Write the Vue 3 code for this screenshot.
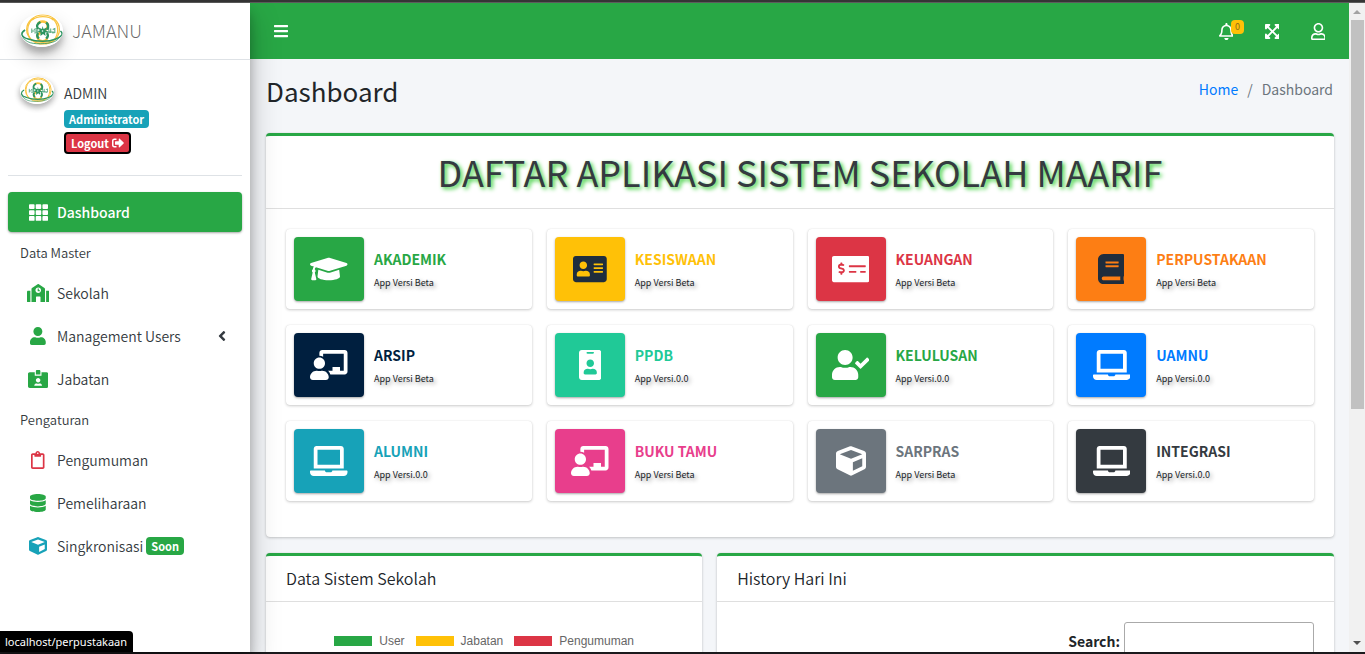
<script setup>
import { h } from 'vue'

const shapes = {
  bars: [448, 'M16 132h416c8.8 0 16-7.2 16-16V76c0-8.8-7.2-16-16-16H16C7.200 60 0 67.200 0 76v40c0 8.800 7.200 16 16 16zm0 160h416c8.800 0 16-7.200 16-16v-40c0-8.800-7.200-16-16-16H16c-8.800 0-16 7.200-16 16v40c0 8.800 7.200 16 16 16zm0 160h416c8.800 0 16-7.200 16-16v-40c0-8.800-7.200-16-16-16H16c-8.800 0-16 7.200-16 16v40c0 8.800 7.200 16 16 16z'],
  bell: [448, 'M439.39 362.29c-19.32-20.76-55.47-51.99-55.47-154.29 0-77.7-54.48-139.9-127.94-155.16V32c0-17.67-14.32-32-31.98-32s-31.98 14.33-31.98 32v20.84C118.56 68.1 64.08 130.3 64.08 208c0 102.3-36.15 133.53-55.47 154.29-6 6.45-8.66 14.16-8.61 21.71.11 16.4 12.98 32 32.1 32h383.8c19.12 0 32-15.6 32.1-32 .05-7.55-2.61-15.27-8.61-21.71zM67.53 368c21.22-27.97 44.42-74.33 44.53-159.42 0-.2-.06-.38-.06-.58 0-61.86 50.14-112 112-112s112 50.14 112 112c0 .2-.06.38-.06.58.11 85.1 23.31 131.46 44.53 159.42H67.53zM224 512c35.32 0 63.97-28.65 63.97-64H160.03c0 35.35 28.65 64 63.97 64z'],
  expand: [448, 'M448 344v112a23.94 23.94 0 0 1-24 24H312c-21.39 0-32.09-25.9-17-41l36.2-36.2L224 295.6 116.77 402.9 153 439c15.09 15.1 4.39 41-17 41H24a23.94 23.94 0 0 1-24-24V344c0-21.4 25.89-32.1 41-17l36.19 36.2L184.46 256 77.18 148.7 41 185c-15.1 15.1-41 4.4-41-17V56a23.94 23.94 0 0 1 24-24h112c21.39 0 32.09 25.9 17 41l-36.2 36.2L224 216.4l107.23-107.3L295 73c-15.09-15.1-4.39-41 17-41h112a23.94 23.94 0 0 1 24 24v112c0 21.4-25.89 32.1-41 17l-36.19-36.2L263.54 256l107.28 107.3L407 327.1c15.1-15.2 41-4.5 41 16.9z'],
  userLine: [448, 'M313.6 304c-28.7 0-42.5 16-89.6 16-47.1 0-60.8-16-89.6-16C60.2 304 0 364.2 0 438.4V464c0 26.5 21.5 48 48 48h352c26.5 0 48-21.5 48-48v-25.6c0-74.2-60.2-134.4-134.4-134.4zM400 464H48v-25.6c0-47.6 38.8-86.4 86.4-86.4 14.6 0 38.3 16 89.6 16 51.7 0 74.9-16 89.6-16 47.6 0 86.4 38.8 86.4 86.4V464zM224 288c79.5 0 144-64.5 144-144S303.5 0 224 0 80 64.5 80 144s64.5 144 144 144zm0-240c52.9 0 96 43.1 96 96s-43.1 96-96 96-96-43.1-96-96 43.1-96 96-96z'],
  user: [448, 'M224 256c70.7 0 128-57.3 128-128S294.7 0 224 0 96 57.3 96 128s57.3 128 128 128zm89.6 32h-16.7c-22.2 10.2-46.9 16-72.9 16s-50.6-5.8-72.9-16h-16.7C60.2 288 0 348.2 0 422.4V464c0 26.5 21.5 48 48 48h352c26.5 0 48-21.5 48-48v-41.6c0-74.2-60.2-134.4-134.4-134.4z'],
  signOut: [512, 'M497 273L329 441c-15 15-41 4.5-41-17v-96H152c-13.3 0-24-10.7-24-24v-96c0-13.3 10.7-24 24-24h136V88c0-21.4 25.9-32 41-17l168 168c9.3 9.4 9.3 24.6 0 34zM192 436v-40c0-6.6-5.4-12-12-12H96c-17.7 0-32-14.3-32-32V160c0-17.7 14.3-32 32-32h84c6.6 0 12-5.4 12-12V76c0-6.6-5.4-12-12-12H96c-53 0-96 43-96 96v192c0 53 43 96 96 96h84c6.6 0 12-5.4 12-12z'],
  teacher: [640, 'M208 352c-2.39 0-4.78.35-7.06 1.09C187.98 357.3 174.35 360 160 360c-14.35 0-27.98-2.7-40.95-6.91-2.28-.74-4.66-1.09-7.05-1.09C49.94 352-.33 402.48 0 464.62.14 490.88 21.73 512 48 512h224c26.27 0 47.86-21.12 48-47.38.33-62.14-49.94-112.62-112-112.62zm-48-32c53.02 0 96-42.98 96-96s-42.98-96-96-96-96 42.98-96 96 42.98 96 96 96zM592 0H208c-26.47 0-48 22.25-48 49.59V96c23.42 0 45.1 6.78 64 17.8V64h352v288h-64v-64H384v64h-76.24c19.1 16.69 33.12 38.73 39.69 64H592c26.47 0 48-22.25 48-49.59V49.59C640 22.25 618.47 0 592 0z'],
  laptop: [640, 'M624 416H381.54c-.74 19.81-14.71 32-32.74 32H288c-18.69 0-33.02-17.47-32.77-32H16c-8.8 0-16 7.2-16 16v16c0 35.2 28.8 64 64 64h512c35.2 0 64-28.8 64-64v-16c0-8.8-7.2-16-16-16zM576 48c0-26.4-21.6-48-48-48H112C85.6 0 64 21.6 64 48v336h512V48zm-64 272H128V64h384v256z'],
  graduation: [640, 'M622.34 153.2L343.4 67.5c-15.2-4.67-31.6-4.67-46.79 0L17.66 153.2c-23.54 7.23-23.54 38.36 0 45.59l48.63 14.94c-10.67 13.19-17.23 29.28-17.88 46.9C38.78 266.15 32 276.11 32 288c0 10.78 5.68 19.85 13.86 25.65L20.33 428.53C18.11 438.52 25.71 448 35.94 448h56.11c10.24 0 17.84-9.48 15.62-19.47L82.14 313.65C90.32 307.85 96 298.78 96 288c0-11.57-6.47-21.25-15.66-26.87.76-15.02 8.44-28.3 20.69-36.72L296.6 284.5c9.06 2.78 26.44 6.25 46.79 0l278.95-85.7c23.55-7.24 23.55-38.36 0-45.6zM352.79 315.09c-28.53 8.76-52.84 3.92-65.59 0l-145.02-44.55L128 384c0 35.35 85.96 64 192 64s192-28.65 192-64l-14.18-113.47-145.03 44.56z'],
  userCheck: [640, 'M224 256c70.7 0 128-57.3 128-128S294.7 0 224 0 96 57.3 96 128s57.3 128 128 128zm89.6 32h-16.7c-22.2 10.2-46.9 16-72.9 16s-50.6-5.8-72.9-16h-16.7C60.2 288 0 348.2 0 422.4V464c0 26.5 21.5 48 48 48h352c26.5 0 48-21.5 48-48v-41.6c0-74.2-60.2-134.4-134.4-134.4zm323-128.4l-27.8-28.1c-4.6-4.7-12.1-4.7-16.8-.1l-104.8 104-45.5-45.8c-4.6-4.7-12.1-4.7-16.8-.1l-28.1 27.9c-4.7 4.6-4.7 12.1-.1 16.8l81.7 82.3c4.6 4.7 12.1 4.7 16.8.1l141.3-140.2c4.6-4.7 4.7-12.2.1-16.8z'],
  cube: [512, 'M239.1 6.3l-208 78c-18.7 7-31.1 25-31.1 45v225.1c0 18.2 10.3 34.8 26.5 42.9l208 104c13.5 6.8 29.4 6.8 42.9 0l208-104c16.3-8.1 26.5-24.8 26.5-42.9V129.3c0-20-12.4-37.9-31.1-44.9l-208-78C262 2.2 250 2.2 239.1 6.3zM256 68.4l192 72v1.1l-192 78-192-78v-1.1l192-72zm32 356V275.5l160-65v133.9l-160 80z'],
  book: [448, 'M448 360V24c0-13.3-10.7-24-24-24H96C43 0 0 43 0 96v320c0 53 43 96 96 96h328c13.3 0 24-10.7 24-24v-16c0-7.5-3.5-14.3-8.9-18.7-4.2-15.4-4.2-59.3 0-74.7 5.4-4.3 8.9-11.1 8.9-18.6zM128 134c0-3.3 2.7-6 6-6h212c3.3 0 6 2.7 6 6v20c0 3.3-2.7 6-6 6H134c-3.3 0-6-2.7-6-6v-20zm0 64c0-3.3 2.7-6 6-6h212c3.3 0 6 2.7 6 6v20c0 3.3-2.7 6-6 6H134c-3.3 0-6-2.7-6-6v-20zm253.4 250H96c-17.7 0-32-14.3-32-32 0-17.6 14.4-32 32-32h285.4c-1.9 17.1-1.9 46.9 0 64z'],
  addressCard: [576, 'M528 32H48C21.5 32 0 53.5 0 80v352c0 26.5 21.5 48 48 48h480c26.5 0 48-21.5 48-48V80c0-26.5-21.5-48-48-48zm-352 96c35.3 0 64 28.7 64 64s-28.7 64-64 64-64-28.7-64-64 28.7-64 64-64zm112 236.8c0 10.6-10 19.2-22.4 19.2H86.4C74 384 64 375.4 64 364.8v-19.2c0-31.8 30.1-57.6 67.2-57.6h5c12.3 5.1 25.7 8 39.8 8s27.6-2.9 39.8-8h5c37.1 0 67.2 25.8 67.2 57.6v19.2zM512 312c0 4.4-3.6 8-8 8H360c-4.4 0-8-3.6-8-8v-16c0-4.4 3.6-8 8-8h144c4.4 0 8 3.6 8 8v16zm0-64c0 4.4-3.6 8-8 8H360c-4.4 0-8-3.6-8-8v-16c0-4.4 3.6-8 8-8h144c4.4 0 8 3.6 8 8v16zm0-64c0 4.4-3.6 8-8 8H360c-4.4 0-8-3.6-8-8v-16c0-4.4 3.6-8 8-8h144c4.4 0 8 3.6 8 8v16z'],
  idBadge: [384, 'M336 0H48C21.5 0 0 21.5 0 48v416c0 26.5 21.5 48 48 48h288c26.5 0 48-21.5 48-48V48c0-26.5-21.5-48-48-48zM144 32h96c8.8 0 16 7.2 16 16s-7.2 16-16 16h-96c-8.8 0-16-7.2-16-16s7.2-16 16-16zm48 128c35.3 0 64 28.7 64 64s-28.7 64-64 64-64-28.7-64-64 28.7-64 64-64zm112 236.8c0 10.6-10 19.2-22.4 19.2H102.4C90 416 80 407.4 80 396.8v-19.2c0-31.8 30.1-57.6 67.2-57.6h5c12.3 5.1 25.7 8 39.8 8s27.6-2.9 39.8-8h5c37.1 0 67.2 25.8 67.2 57.6v19.2z'],
  moneyCheck: [640, 'M608 32H32C14.33 32 0 46.33 0 64v384c0 17.67 14.33 32 32 32h576c17.67 0 32-14.33 32-32V64c0-17.67-14.33-32-32-32zM176 327.88V344c0 4.42-3.58 8-8 8h-16c-4.42 0-8-3.58-8-8v-16.29c-11.29-.58-22.27-4.52-31.37-11.35-3.9-2.93-4.1-8.77-.57-12.14l11.75-11.21c2.77-2.64 6.89-2.76 10.13-.73 3.87 2.42 8.26 3.72 12.82 3.72h28.11c6.5 0 11.8-5.92 11.8-13.19 0-5.95-3.61-11.19-8.77-12.73l-45-13.5c-18.59-5.58-31.58-23.42-31.58-43.39 0-24.52 19.05-44.44 42.67-45.07V152c0-4.42 3.58-8 8-8h16c4.42 0 8 3.58 8 8v16.29c11.29.58 22.27 4.51 31.37 11.35 3.9 2.93 4.1 8.77.57 12.14l-11.75 11.21c-2.77 2.64-6.89 2.76-10.13.73-3.87-2.43-8.26-3.72-12.82-3.72h-28.11c-6.5 0-11.8 5.92-11.8 13.19 0 5.95 3.61 11.19 8.77 12.73l45 13.5c18.59 5.58 31.58 23.42 31.58 43.39 0 24.53-19.05 44.44-42.67 45.07zM416 312c0 4.42-3.58 8-8 8H296c-4.42 0-8-3.58-8-8v-16c0-4.42 3.58-8 8-8h112c4.42 0 8 3.58 8 8v16zm160 0c0 4.42-3.58 8-8 8h-80c-4.42 0-8-3.58-8-8v-16c0-4.42 3.58-8 8-8h80c4.42 0 8 3.58 8 8v16zm0-96c0 4.42-3.58 8-8 8H296c-4.42 0-8-3.58-8-8v-16c0-4.42 3.58-8 8-8h272c4.42 0 8 3.58 8 8v16z'],
  school: [640, 'M0 224v272c0 8.84 7.16 16 16 16h80V192H32c-17.67 0-32 14.33-32 32zm360-48h-24v-40c0-4.42-3.58-8-8-8h-16c-4.42 0-8 3.58-8 8v64c0 4.42 3.58 8 8 8h48c4.42 0 8-3.58 8-8v-16c0-4.42-3.58-8-8-8zm137.75-63.96l-160-106.67a32.02 32.02 0 0 0-35.5 0l-160 106.67A32.002 32.002 0 0 0 128 138.66V512h128V368c0-8.84 7.16-16 16-16h96c8.84 0 16 7.16 16 16v144h128V138.67c0-10.7-5.35-20.69-14.25-26.63zM320 256c-44.18 0-80-35.82-80-80s35.82-80 80-80 80 35.82 80 80-35.82 80-80 80zm288-64h-64v320h80c8.84 0 16-7.16 16-16V224c0-17.67-14.33-32-32-32z'],
  database: [448, 'M448 73.143v45.714C448 159.143 347.667 192 224 192S0 159.143 0 118.857V73.143C0 32.857 100.333 0 224 0s224 32.857 224 73.143zM448 176v102.857C448 319.143 347.667 352 224 352S0 319.143 0 278.857V176c48.125 33.143 136.208 48.572 224 48.572S399.874 209.143 448 176zm0 160v102.857C448 479.143 347.667 512 224 512S0 479.143 0 438.857V336c48.125 33.143 136.208 48.572 224 48.572S399.874 369.143 448 336z'],
  idCard: [576, 'M528 64H384v96H192V64H48C21.5 64 0 85.5 0 112v352c0 26.5 21.5 48 48 48h480c26.5 0 48-21.5 48-48V112c0-26.5-21.5-48-48-48zM288 224c35.3 0 64 28.7 64 64s-28.7 64-64 64-64-28.7-64-64 28.7-64 64-64zm93.3 224H194.7c-10.4 0-18.8-10-15.6-19.8 8.3-25.6 32.4-44.2 60.9-44.2h8.2c12.3 5.1 25.7 8 39.8 8s27.6-2.9 39.8-8h8.2c28.4 0 52.5 18.5 60.9 44.2 3.2 9.9-5.2 19.8-15.6 19.8zM352 32c0-17.7-14.3-32-32-32h-64c-17.7 0-32 14.3-32 32v96h128V32z'],
  clipboard: [384, 'M336 64h-80c0-35.3-28.7-64-64-64s-64 28.7-64 64H48C21.5 64 0 85.5 0 112v352c0 26.5 21.5 48 48 48h288c26.5 0 48-21.5 48-48V112c0-26.5-21.5-48-48-48zM192 40c13.3 0 24 10.7 24 24s-10.7 24-24 24-24-10.7-24-24 10.7-24 24-24zm144 418c0 3.3-2.7 6-6 6H54c-3.3 0-6-2.7-6-6V118c0-3.3 2.7-6 6-6h42v36c0 6.6 5.4 12 12 12h168c6.6 0 12-5.4 12-12v-36h42c3.3 0 6 2.7 6 6z'],
  grid: [512, 'M24 32h102a24 24 0 0 1 24 24v80a24 24 0 0 1-24 24H24a24 24 0 0 1-24-24V56a24 24 0 0 1 24-24zm181 0h102a24 24 0 0 1 24 24v80a24 24 0 0 1-24 24H205a24 24 0 0 1-24-24V56a24 24 0 0 1 24-24zm181 0h102a24 24 0 0 1 24 24v80a24 24 0 0 1-24 24H386a24 24 0 0 1-24-24V56a24 24 0 0 1 24-24zM24 192h102a24 24 0 0 1 24 24v80a24 24 0 0 1-24 24H24a24 24 0 0 1-24-24v-80a24 24 0 0 1 24-24zm181 0h102a24 24 0 0 1 24 24v80a24 24 0 0 1-24 24H205a24 24 0 0 1-24-24v-80a24 24 0 0 1 24-24zm181 0h102a24 24 0 0 1 24 24v80a24 24 0 0 1-24 24H386a24 24 0 0 1-24-24v-80a24 24 0 0 1 24-24zM24 352h102a24 24 0 0 1 24 24v80a24 24 0 0 1-24 24H24a24 24 0 0 1-24-24v-80a24 24 0 0 1 24-24zm181 0h102a24 24 0 0 1 24 24v80a24 24 0 0 1-24 24H205a24 24 0 0 1-24-24v-80a24 24 0 0 1 24-24zm181 0h102a24 24 0 0 1 24 24v80a24 24 0 0 1-24 24H386a24 24 0 0 1-24-24v-80a24 24 0 0 1 24-24z'],
  angle: [256, 'M31.7 239l136-136c9.4-9.4 24.6-9.4 33.9 0l22.6 22.6c9.4 9.4 9.4 24.6 0 33.9L127.900 256l96.400 96.400c9.400 9.400 9.400 24.600 0 33.900L201.700 409c-9.400 9.400-24.600 9.400-33.900 0l-136-136c-9.500-9.400-9.500-24.600-.1-34z'],
}

const Icon = ({ name, size }) => {
  const [w, d] = shapes[name]
  return h('svg', { viewBox: `0 0 ${w} 512`, width: (w / 512) * size, height: size, fill: 'currentColor', 'aria-hidden': 'true' }, [h('path', { d })])
}
Icon.props = ['name', 'size']

const Logo = () =>
  h('svg', { viewBox: '0 0 84 66', preserveAspectRatio: 'none', role: 'img', 'aria-label': 'JAMANU' }, [
    h('ellipse', { cx: 42, cy: 33, rx: 42, ry: 33, fill: '#fff' }),
    h('g', { fill: 'none', stroke: '#f9c440', 'stroke-width': 2.4 }, [
      h('ellipse', { cx: 45, cy: 31, rx: 32, ry: 29 }),
      h('path', { d: 'M27 8c-15 12-16 32-3 46M62 8c15 12 15 32 3 46M24 12C34 3 56 3 65 12M26 53c10 5 28 5 38 0' }),
      h('path', { 'stroke-width': 4.6, d: 'M35 21c2-8 16-8 19 0 2 7-3 9-7 13M41 36c-6 4-8 8-6 13 4 8 16 7 18-1' }),
    ]),
    h('g', { fill: 'none', stroke: '#2c9460' }, [
      h('path', { 'stroke-width': 4.6, d: 'M40 16c-7 4-9 9-4 14M51 17c5 4 5 9 2 14M36 38c-4 3-3 8 1 11M52 38c4 3 3 8-1 11' }),
      h('path', { 'stroke-width': 2, opacity: 0.8, d: 'M23 29v9M27 31l6-2v8l-5 1M36 32h4M23 34h12M51 32l5-3 1 9M60 29v9M64 31l4-2v8l-5 1M51 36h15' }),
      h('path', { 'stroke-width': 3, d: 'M10 32C0 38 2 46 16 50c17 6 40 6 54 0 13-5 15-11 9-16' }),
      h('path', { 'stroke-width': 1.6, d: 'M4 43c6 15 22 18 44 16 16-1 26-5 30-14' }),
    ]),
    h('path', { fill: '#2c9460', d: 'M44 24l2 6 7-3-3 6 6 3-7 1 1 7-5-4-5 4v-7l-7-1 6-3-3-6 7 3z' }),
    h('circle', { cx: 44, cy: 34, r: 1.600, fill: '#fff' }),
  ])

const masterLinks = [
  { icon: 'school', label: 'Sekolah', tone: 'green' },
  { icon: 'user', label: 'Management Users', tone: 'green', expandable: true },
  { icon: 'idCard', label: 'Jabatan', tone: 'green' },
]
const settingLinks = [
  { icon: 'clipboard', label: 'Pengumuman', tone: 'red' },
  { icon: 'database', label: 'Pemeliharaan', tone: 'green' },
  { icon: 'cube', label: 'Singkronisasi', tone: 'teal', badge: 'Soon' },
]
const apps = [
  { name: 'AKADEMIK', icon: 'graduation', version: 'App Versi Beta', tone: 'green' },
  { name: 'KESISWAAN', icon: 'addressCard', version: 'App Versi Beta', tone: 'yellow' },
  { name: 'KEUANGAN', icon: 'moneyCheck', version: 'App Versi Beta', tone: 'red' },
  { name: 'PERPUSTAKAAN', icon: 'book', version: 'App Versi Beta', tone: 'orange' },
  { name: 'ARSIP', icon: 'teacher', version: 'App Versi Beta', tone: 'navy' },
  { name: 'PPDB', icon: 'idBadge', version: 'App Versi.0.0', tone: 'mint' },
  { name: 'KELULUSAN', icon: 'userCheck', version: 'App Versi.0.0', tone: 'green' },
  { name: 'UAMNU', icon: 'laptop', version: 'App Versi.0.0', tone: 'blue' },
  { name: 'ALUMNI', icon: 'laptop', version: 'App Versi.0.0', tone: 'teal' },
  { name: 'BUKU TAMU', icon: 'teacher', version: 'App Versi Beta', tone: 'pink' },
  { name: 'SARPRAS', icon: 'cube', version: 'App Versi Beta', tone: 'gray' },
  { name: 'INTEGRASI', icon: 'laptop', version: 'App Versi.0.0', tone: 'dark' },
]
const legend = [
  { label: 'User', tone: 'green' },
  { label: 'Jabatan', tone: 'yellow' },
  { label: 'Pengumuman', tone: 'red' },
]
</script>

<template>
  <div class="window">
    <div class="edge-top"></div>
    <div class="viewport">
      <aside class="sidebar">
        <a class="brand" href="#"><Logo class="brand-logo" /><span>JAMANU</span></a>
        <div class="profile">
          <Logo class="avatar" />
          <div class="profile-info">
            <a class="profile-name" href="#">ADMIN</a>
            <span class="badge teal">Administrator</span>
            <button class="logout" type="button">Logout <Icon name="signOut" :size="12" /></button>
          </div>
        </div>
        <nav class="menu">
          <a class="item active" href="#"><span class="item-icon"><Icon name="grid" :size="19" /></span>Dashboard</a>
          <h2 class="menu-title">Data Master</h2>
          <a v-for="link in masterLinks" :key="link.label" class="item" href="#">
            <span class="item-icon" :class="link.tone"><Icon :name="link.icon" :size="18" /></span>
            {{ link.label }}
            <Icon v-if="link.expandable" class="chevron" name="angle" :size="16" />
          </a>
          <h2 class="menu-title">Pengaturan</h2>
          <a v-for="link in settingLinks" :key="link.label" class="item" href="#">
            <span class="item-icon" :class="link.tone"><Icon :name="link.icon" :size="18" /></span>
            {{ link.label }}
            <span v-if="link.badge" class="badge soon">{{ link.badge }}</span>
          </a>
        </nav>
      </aside>

      <div class="page">
        <header class="topbar">
          <button type="button" aria-label="Menu"><Icon name="bars" :size="16" /></button>
          <div class="topbar-actions">
            <button type="button" aria-label="Notifikasi"><Icon name="bell" :size="17" /><span class="count">0</span></button>
            <button type="button" aria-label="Layar penuh"><Icon name="expand" :size="17" /></button>
            <button type="button" aria-label="Akun"><Icon name="userLine" :size="17" /></button>
          </div>
        </header>

        <main class="content">
          <div class="page-head">
            <h1>Dashboard</h1>
            <nav class="crumbs"><a href="#">Home</a><span>/</span><span>Dashboard</span></nav>
          </div>

          <section class="card wide">
            <h2 class="banner">DAFTAR APLIKASI SISTEM SEKOLAH MAARIF</h2>
            <div class="apps">
              <a v-for="app in apps" :key="app.name" class="app" :class="app.tone" href="#">
                <span class="tile"><Icon :name="app.icon" :size="30" /></span>
                <span class="app-text">
                  <strong>{{ app.name }}</strong>
                  <small>{{ app.version }}</small>
                </span>
              </a>
            </div>
          </section>

          <section class="card narrow">
            <h3>Data Sistem Sekolah</h3>
            <ul class="legend">
              <li v-for="entry in legend" :key="entry.label"><i :class="entry.tone"></i>{{ entry.label }}</li>
            </ul>
          </section>

          <section class="card broad">
            <h3>History Hari Ini</h3>
            <div class="search">
              <label for="history-search">Search:</label>
              <input id="history-search" type="search" />
            </div>
          </section>
        </main>
      </div>

      <div class="scrollbar" aria-hidden="true">
        <svg width="16" height="17" viewBox="0 0 16 17"><path d="M4 11h8l-4-4z" fill="#a3a3a3" /></svg>
        <div class="thumb"></div>
        <svg width="16" height="17" viewBox="0 0 16 17"><path d="M4 6h8l-4 4z" fill="#505050" /></svg>
      </div>
    </div>
    <div class="edge-bottom"></div>
    <div class="status">localhost/perpustakaan</div>
  </div>
</template>

<style>
body {
  margin: 0;
  overflow: hidden;
}
</style>

<style scoped>
.window {
  --tone: #28a745;
  position: relative;
  display: flex;
  flex-direction: column;
  height: 100vh;
  overflow: hidden;
  color: #212529;
  background: #f4f6f9;
  font: 14px/24px "Noto Sans CJK SC", "Noto Sans", sans-serif;
}
.window * {
  box-sizing: border-box;
}
a {
  color: inherit;
  text-decoration: none;
}
button {
  font: inherit;
  cursor: pointer;
}
svg {
  display: block;
  flex: none;
}
.green { --tone: #28a745; }
.yellow { --tone: #ffc107; }
.red { --tone: #dc3545; }
.orange { --tone: #fd7e14; }
.navy { --tone: #001f3f; }
.mint { --tone: #20c997; }
.blue { --tone: #007bff; }
.teal { --tone: #17a2b8; }
.pink { --tone: #e83e8c; }
.gray { --tone: #6c757d; }
.dark { --tone: #343a40; }

.edge-top {
  flex: none;
  height: 3px;
  background: #353535;
  border-bottom: 1px solid #5c5c5c;
}
.edge-bottom {
  flex: none;
  height: 2px;
  background: #1b1a1d;
}
.viewport {
  display: flex;
  flex: 1;
  min-height: 0;
}

.sidebar {
  position: relative;
  z-index: 2;
  flex: none;
  width: 250px;
  background: #fff;
  color: #343a40;
  font-weight: 350;
  box-shadow: 0 14px 28px rgba(0, 0, 0, 0.25), 0 10px 10px rgba(0, 0, 0, 0.22);
}
.brand {
  display: flex;
  align-items: center;
  gap: 9px;
  height: 57px;
  padding: 0 20px 2px;
  border-bottom: 1px solid #dee2e6;
  color: rgba(0, 0, 0, 0.6);
  font-size: 18px;
  font-weight: 300;
}
.brand-logo {
  width: 43px;
  height: 33px;
  border-radius: 50%;
  box-shadow: 0 10px 20px rgba(0, 0, 0, 0.19), 0 6px 6px rgba(0, 0, 0, 0.23);
}
.profile {
  display: flex;
  gap: 10px;
  margin: 0 8px;
  padding: 17px 12px 21px;
  border-bottom: 1px solid #dee2e6;
}
.avatar {
  width: 34px;
  height: 27px;
  border-radius: 50%;
  box-shadow: 0 3px 6px rgba(0, 0, 0, 0.16), 0 3px 6px rgba(0, 0, 0, 0.23);
}
.profile-info {
  display: flex;
  flex-direction: column;
  align-items: flex-start;
  gap: 4px;
}
.profile-name {
  padding: 4px 0 1px;
}
.badge {
  padding: 0 5px;
  border-radius: 4px;
  background: var(--tone);
  color: #fff;
  font-size: 11px;
  font-weight: 700;
  line-height: 18px;
}
.logout {
  display: flex;
  align-items: center;
  gap: 3px;
  padding: 0 5px;
  border: 2px solid #000;
  border-radius: 4px;
  background: #dc3545;
  color: #fff;
  font-size: 11px;
  font-weight: 700;
  line-height: 18px;
}
.menu {
  display: flex;
  flex-direction: column;
  gap: 3px;
  padding: 16px 8px;
}
.item {
  display: flex;
  align-items: center;
  height: 40px;
  padding: 0 16px;
  border-radius: 4px;
}
.item.active {
  background: #28a745;
  color: #fff;
  font-weight: 500;
  box-shadow: 0 1px 3px rgba(0, 0, 0, 0.12), 0 1px 2px rgba(0, 0, 0, 0.24);
}
.item-icon {
  display: flex;
  justify-content: center;
  width: 28px;
  margin-right: 5px;
  color: var(--tone);
}
.active .item-icon {
  color: #fff;
}
.chevron {
  margin-left: auto;
}
.soon {
  margin-left: 3px;
}
.menu-title {
  margin: 0;
  padding: 6px 12px 5px;
  font-size: 13px;
  font-weight: 350;
}

.page {
  flex: 1;
  min-width: 0;
}
.topbar {
  display: flex;
  align-items: center;
  justify-content: space-between;
  height: 56px;
  padding: 0 8px;
  background: #28a745;
}
.topbar button {
  position: relative;
  display: flex;
  justify-content: center;
  width: 46px;
  padding: 12px 0;
  border: 0;
  background: none;
  color: #fff;
}
.topbar-actions {
  display: flex;
  align-items: center;
}
.count {
  position: absolute;
  top: 9px;
  right: 5px;
  padding: 0 4px;
  border-radius: 4px;
  background: #ffc107;
  color: #8a6d1b;
  font-size: 9px;
  line-height: 14px;
}
.content {
  display: grid;
  grid-template-columns: repeat(12, 1fr);
  gap: 16px 15px;
  padding: 14px 15px 0 16px;
}
.page-head {
  grid-column: 1 / -1;
  display: flex;
  justify-content: space-between;
  align-items: flex-start;
  height: 44px;
}
h1 {
  margin: 0;
  font-size: 26px;
  font-weight: 400;
  line-height: 36px;
}
.crumbs {
  display: flex;
  gap: 9px;
  padding: 4px 1px 0 0;
  color: #6c757d;
}
.crumbs a {
  color: #007bff;
}
.card {
  border-top: 3px solid #28a745;
  border-radius: 4px;
  background: #fff;
  box-shadow: 0 0 1px rgba(0, 0, 0, 0.125), 0 1px 3px rgba(0, 0, 0, 0.2);
}
.wide { grid-column: span 12; }
.narrow { grid-column: span 5; }
.broad { grid-column: span 7; }
.banner {
  margin: 0;
  padding: 11px 20px 13px;
  border-bottom: 1px solid rgba(0, 0, 0, 0.125);
  color: #343a40;
  font-size: 36px;
  font-weight: 400;
  line-height: 48px;
  text-align: center;
  text-shadow: 2px 2px 4px #32cd32;
}
.apps {
  display: grid;
  grid-template-columns: repeat(4, 1fr);
  gap: 16px 15px;
  padding: 20px 20px 36px;
}
.app {
  display: flex;
  gap: 10px;
  padding: 8px;
  border-radius: 4px;
  box-shadow: 0 0 1px rgba(0, 0, 0, 0.125), 0 1px 3px rgba(0, 0, 0, 0.2);
}
.tile {
  display: flex;
  align-items: center;
  justify-content: center;
  width: 70px;
  height: 64px;
  border-radius: 4px;
  background: var(--tone);
  color: #fff;
  box-shadow: 0 1px 3px rgba(0, 0, 0, 0.12), 0 1px 2px rgba(0, 0, 0, 0.24);
}
.yellow .tile,
.orange .tile {
  color: #1f2d3d;
}
.app-text {
  display: flex;
  flex-direction: column;
  padding-top: 10px;
}
.app strong {
  color: var(--tone);
  font-weight: 700;
}
.app small {
  font-size: 9px;
  line-height: 24px;
  text-shadow: 2px 2px 4px rgba(0, 0, 0, 0.4);
}
h3 {
  margin: 0;
  padding: 10px 20px 11px;
  border-bottom: 1px solid rgba(0, 0, 0, 0.125);
  font-size: 16px;
  font-weight: 350;
}
.legend {
  display: flex;
  justify-content: center;
  gap: 11px;
  margin: 0;
  padding: 32px 20px;
  list-style: none;
  color: #666;
  font: 12px/14px "Liberation Sans", Arial, sans-serif;
}
.legend li {
  display: flex;
  align-items: center;
  gap: 7px;
}
.legend i {
  width: 38px;
  height: 10px;
  background: var(--tone);
}
.search {
  display: flex;
  justify-content: flex-end;
  align-items: center;
  gap: 4px;
  padding: 20px;
  font-weight: 700;
}
.search input {
  width: 190px;
  height: 38px;
  padding: 5px;
  border: 1px solid #aaa;
  border-radius: 3px;
  background: transparent;
  font: inherit;
}

.scrollbar {
  display: flex;
  flex-direction: column;
  flex: none;
  width: 16px;
  background: #f1f1f1;
}
.thumb {
  height: 60%;
  margin: 0 1px 0 2px;
  background: #c1c1c1;
}
.scrollbar svg:last-child {
  margin-top: auto;
}
.status {
  position: absolute;
  z-index: 3;
  left: 0;
  bottom: 2px;
  padding: 0 6px 0 5px;
  border-radius: 0 4px 0 0;
  background: #000;
  color: #fff;
  font: 11px/21px "Noto Sans", sans-serif;
}
</style>
